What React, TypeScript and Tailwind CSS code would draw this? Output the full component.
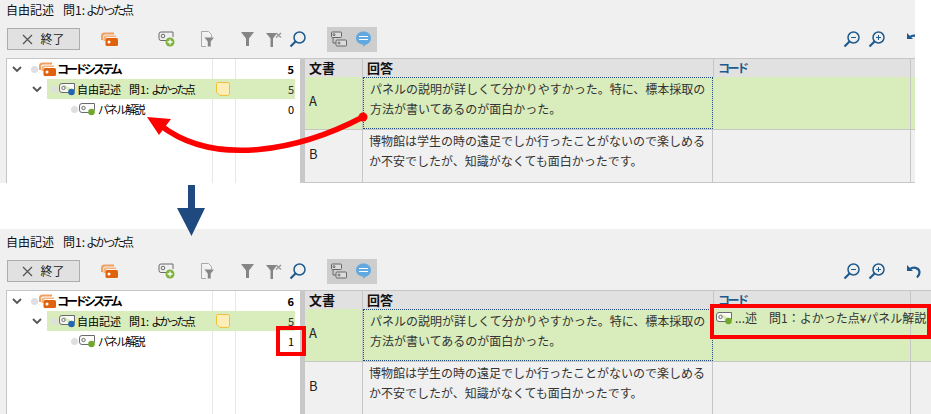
import React from 'react';

const JP = "font-['Noto_Sans_CJK_JP','Liberation_Sans',sans-serif]";

const CodeTag = ({ dot, className = '' }: { dot: string; className?: string }) => (
  <svg width="17" height="14" viewBox="0 0 17 14" className={`shrink-0 ${className}`}>
    <path d="M3 1.500h12.500v7M10 10.500H3a2.500 2.500 0 0 1-2.500-2.500V4A2.500 2.500 0 0 1 3 1.500" fill="#fafafa" stroke="#6b6b6b" strokeWidth="1" />
    <circle cx="4.500" cy="6" r="1.700" fill="none" stroke="#6b6b6b" strokeWidth="1" />
    <circle cx="12.500" cy="10" r="3.300" fill={dot} />
  </svg>
);

const SystemIcon = ({ className = '' }: { className?: string }) => (
  <svg width="17" height="14" viewBox="0 0 17 14" className={`shrink-0 ${className}`}>
    <path d="M0 8V4a3.500 3.500 0 0 1 3.500-3.500H13v2H4A2 2 0 0 0 2 4.500V8z" fill="#f0a060" />
    <path d="M2.500 9V6a2.500 2.500 0 0 1 2.500-2.500h10V5H6a1.500 1.500 0 0 0-1.500 1.500V9z" fill="#f5b27a" />
    <rect x="4.500" y="6" width="12.500" height="8" rx="1.500" fill="#e0620d" />
    <circle cx="8" cy="10" r="1.500" fill="#fff" />
  </svg>
);

const Chevron = () => (
  <svg width="10" height="7" viewBox="0 0 10 7" className="shrink-0">
    <path d="M1 1l4 4 4-4" fill="none" stroke="#555" strokeWidth="1.800" />
  </svg>
);

const Dot = ({ className = '' }: { className?: string }) => (
  <span className={`block w-[7px] h-[7px] rounded-full bg-[#dfdfdf] shrink-0 ${className}`} />
);

const Lens = ({ sign, className = '' }: { sign?: '+' | '-'; className?: string }) => (
  <svg width="17" height="17" viewBox="0 0 17 17" className={`shrink-0 ${className}`}>
    <circle cx="10.500" cy="6.500" r="5.500" fill="none" stroke="#1f5a8c" strokeWidth="1.500" />
    <path d="M6.500 10.500l-5 5" stroke="#1f5a8c" strokeWidth="2.200" />
    {sign && <path d="M8 6.500h5" stroke="#1f5a8c" strokeWidth="1" />}
    {sign === '+' && <path d="M10.500 4v5" stroke="#1f5a8c" strokeWidth="1" />}
  </svg>
);

const Toolbar = () => (
  <div className="flex items-center h-[22px] mt-[8px] ml-[7px] w-[924px]">
    <div className="w-[73px] h-[22px] border border-[#adadad] bg-[#e1e1e1] flex items-center justify-center gap-[7px] text-[12px] text-[#222]">
      <svg width="11" height="11" viewBox="0 0 11 11"><path d="M1 1l9 9M10 1l-9 9" stroke="#555" strokeWidth="1.300" /></svg>
      <span>終了</span>
    </div>
    <SystemIcon className="ml-[21px]" />
    <svg width="17" height="16" viewBox="0 0 17 16" className="ml-[40px] shrink-0">
      <path d="M3 1h12v5M8 9.500H3A2 2 0 0 1 1 7.500V3a2 2 0 0 1 2-2" fill="none" stroke="#6b6b6b" />
      <circle cx="5" cy="5" r="1.800" fill="none" stroke="#6b6b6b" />
      <circle cx="12" cy="11" r="4.500" fill="#7fb23c" />
      <path d="M9.500 11h5M12 8.500v5" stroke="#fff" strokeWidth="1.300" />
    </svg>
    <svg width="13" height="16" viewBox="0 0 13 16" className="ml-[26px] shrink-0">
      <path d="M.5.500h7l3 3v3M5 15.500H.5V.500" fill="#f4f4f4" stroke="#a9a9a9" />
      <path d="M3.500 6.500H13l-3.300 4v5H6.800v-5z" fill="#858585" />
    </svg>
    <svg width="13" height="14" viewBox="0 0 13 14" className="ml-[27px] shrink-0"><path d="M0 0h13L8 6.500V14H5V6.500z" fill="#858585" /></svg>
    <svg width="16" height="15" viewBox="0 0 16 15" className="ml-[12px] shrink-0">
      <path d="M0 1h11L7 6.500V15H4.500V6.500z" fill="#858585" />
      <path d="M10 1l5 4.500M15 1l-5 4.500" stroke="#9a9a9a" strokeWidth="1.500" />
    </svg>
    <Lens className="ml-[7px]" />
    <div className="ml-[21px] w-[50px] h-[25px] bg-[#cdcdcd] flex items-center gap-[9px] pl-[4px] shrink-0">
      <svg width="16" height="16" viewBox="0 0 16 16" className="shrink-0">
        <rect x=".5" y="1" width="10" height="5.500" rx="1" fill="#dcdcdc" stroke="#666" />
        <rect x="5" y="9" width="10.500" height="6" rx="1" fill="#dcdcdc" stroke="#666" />
        <circle cx="3" cy="3.700" r="1" fill="none" stroke="#666" />
        <circle cx="8" cy="12" r="1" fill="none" stroke="#666" />
        <path d="M2 7v5h3" fill="none" stroke="#666" />
      </svg>
      <svg width="15" height="16" viewBox="0 0 15 16" className="shrink-0">
        <path d="M7.500 .5C11.500 .5 15 3 15 7s-3.500 6.500-5 6.500L7 16l.3-2.500C3.500 13.500 0 11 0 7S3.500 .5 7.500 .5z" fill="#63a9df" />
        <path d="M3 5.500h9M3 8.500h9" stroke="#fff" strokeWidth="1.200" />
      </svg>
    </div>
    <div className="ml-[466px] flex items-center">
      <Lens sign="-" />
      <Lens sign="+" className="ml-[8px]" />
      <svg width="15" height="15" viewBox="0 0 15 15" className="ml-[21px] shrink-0">
        <path d="M1 1v6h6z" fill="#1f5a8c" />
        <path d="M4 5c3-2.500 9-1.500 9.500 3 .2 2.500-1 4-2.500 5.500" fill="none" stroke="#1f5a8c" strokeWidth="2.200" />
      </svg>
    </div>
  </div>
);

const Tree = ({ total, leaf }: { total: number; leaf: number }) => (
  <div className="relative ml-[6px] w-[294px] h-[135px] bg-white border-t border-l border-[#c6c6c6] pr-[5px] text-black overflow-hidden">
    <div className="absolute top-0 bottom-0 left-[205px] w-[24px] border-x border-[#e8e8e8]" />
    <div className="relative">
      {/* root */}
      <div className="h-[20px] flex items-center pl-[5px] font-bold">
        <Chevron />
        <Dot className="ml-[9px]" />
        <SystemIcon className="ml-[1px]" />
        <span className="ml-[1px] tracking-[-3px] text-[12px] whitespace-nowrap">コードシステム</span>
        <span className="ml-auto pr-[1px] text-[11px]">{total}</span>
      </div>
      {/* selected question */}
      <div className="flex h-[20px] items-center">
        <div className="w-[40px] pl-[25px]"><Chevron /></div>
        <div className="flex-1 h-[20px] bg-[#d8ecbc] flex items-center pl-[4px] text-[11px]">
          <Dot />
          <CodeTag dot="#2267ad" className="ml-[1px]" />
          <div className="ml-[1px] w-[139px] whitespace-nowrap">
            自由記述<span className="ml-[8px]">問1:</span><span className="ml-[2px] tracking-[-2.600px]">よかった点</span>
          </div>
          <svg width="14" height="14" viewBox="0 0 14 14" className="shrink-0">
            <path d="M1.500 .5h10a2 2 0 0 1 2 2v9a2 2 0 0 1-2 2H4L.5 10V1.500a1 1 0 0 1 1-1z" fill="#fdeeb8" stroke="#f0bf3c" />
          </svg>
          <span className="ml-auto pr-[1px] text-[#333]">5</span>
        </div>
      </div>
      {/* leaf code */}
      <div className="h-[20px] flex items-center pl-[64px]">
        <Dot />
        <CodeTag dot="#70a82e" className="ml-[1px]" />
        <span className="ml-[2px] text-[11px] tracking-[-1.900px] whitespace-nowrap">パネル解説</span>
        <span className="ml-auto pr-[1px] text-[11px]">{leaf}</span>
      </div>
    </div>
  </div>
);

const Row = ({ name, selected, lines, code }: { name: string; selected?: boolean; lines: string[]; code?: React.ReactNode }) => (
  <div className={`grid grid-cols-[58px_350px_198px_1fr] h-[53px] border-b border-[#c6c6c6] text-[12px] text-[#333] ${selected ? 'bg-[#d8ecbc]' : ''}`}>
    <div className="flex items-center pl-[4px] border-r border-[#c6c6c6] text-[13px] text-[#222] pb-[4px]">{name}</div>
    <div className={`pl-[6px] pt-[1px] leading-[20px] whitespace-nowrap ${selected ? 'border border-dotted border-[#1f4a7f]' : 'border-r border-[#c6c6c6]'}`}>
      {lines.map((l) => <div key={l}>{l}</div>)}
    </div>
    <div className="border-r border-[#c6c6c6] whitespace-nowrap">{code}</div>
    <div />
  </div>
);

const Table = ({ coded }: { coded?: boolean }) => (
  <div className="flex-1 border-t border-[#c6c6c6] overflow-hidden">
    <div className="grid grid-cols-[58px_350px_198px_1fr] h-[18px] bg-[#e1e1e1] font-bold text-[13px] leading-[18px] text-[#111]">
      <div className="pl-[4px] border-r border-[#c6c6c6]">文書</div>
      <div className="pl-[4px]">回答</div>
      <div className="pl-[4px] border-x border-[#c6c6c6] text-[#1f5a8c] text-[12px] tracking-[-2.500px]">コード</div>
      <div />
    </div>
    <Row
      name="A"
      selected
      lines={['パネルの説明が詳しくて分かりやすかった。特に、標本採取の', '方法が書いてあるのが面白かった。']}
      code={coded && (
        <div className="flex items-center h-[18px] pl-[3px]">
          <CodeTag dot="#70a82e" />
          <span className="ml-[2px] w-[34px] shrink-0">...述</span>
          <span className="shrink-0">問1：よかった点¥パネル解説</span>
        </div>
      )}
    />
    <Row name="B" lines={['博物館は学生の時の遠足でしか行ったことがないので楽しめる', 'か不安でしたが、知識がなくても面白かったです。']} />
  </div>
);

const Panel = ({ outer, total, leaf, coded }: { outer: string; total: number; leaf: number; coded?: boolean }) => (
  <div className={`bg-[#f0f0f0] overflow-hidden ${outer}`}>
    <div className="w-[931px]">
      <div className="h-[20px] pl-[6px] text-[12px] leading-[20px] text-[#111] whitespace-nowrap">
        自由記述<span className="ml-[9px]">問1:</span><span className="ml-[1px] tracking-[-3px]">よかった点</span>
      </div>
      <Toolbar />
      <div className="flex mt-[8px]">
        <Tree total={total} leaf={leaf} />
        <div className="w-[5px] bg-[#c8c8c8] shrink-0" />
        <Table coded={coded} />
      </div>
    </div>
  </div>
);

export default function App() {
  return (
    <div className={`relative w-[931px] h-[414px] overflow-hidden bg-white ${JP}`}>
      <Panel outer="w-[915px] h-[183px]" total={5} leaf={0} />
      <div className="h-[46px]" />
      <Panel outer="w-[931px] h-[185px] pt-[3px]" total={6} leaf={1} coded />

      {/* annotations on top of the two screens */}
      <svg width="931" height="414" viewBox="0 0 931 414" className="absolute inset-0 pointer-events-none">
        <path d="M363 117C300 150 215 168 160 125" fill="none" stroke="#ff0000" strokeWidth="5.500" />
        <circle cx="363" cy="117" r="4.500" fill="#ff0000" />
        <path d="M147 117L171 119L159 135z" fill="#ff0000" />
        <path d="M188 185h7v23h10l-13.500 28L177 208h11z" fill="#1f4a7f" />
      </svg>
      <div className="absolute left-[276px] top-[326px] w-[30px] h-[30px] border-4 border-[#ff0000]" />
      <div className="absolute left-[710px] top-[304px] w-[221px] h-[35px] border-4 border-[#ff0000]" />
    </div>
  );
}
